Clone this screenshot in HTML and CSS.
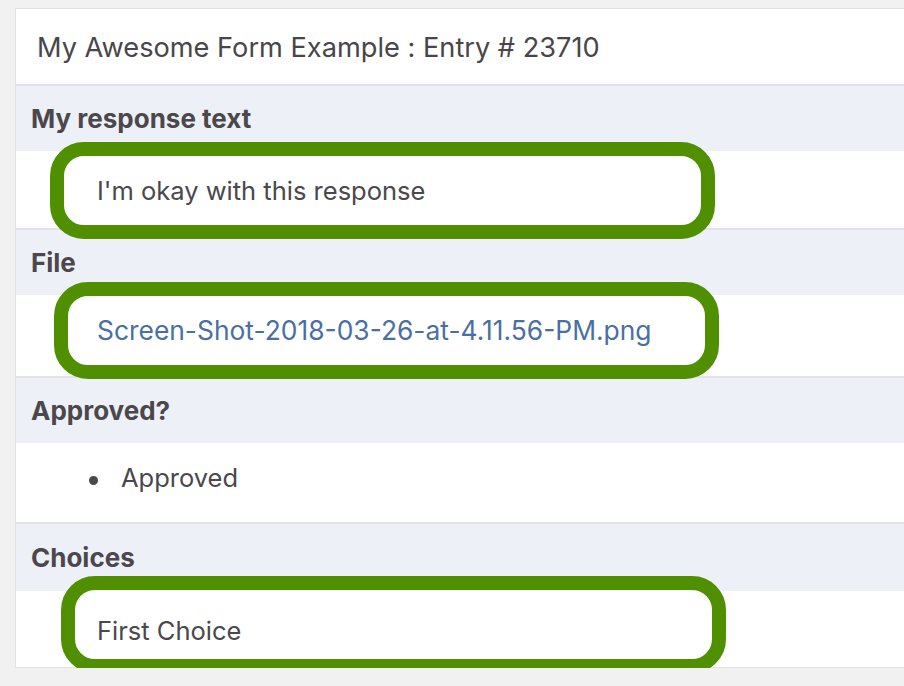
FILE: index.html
```html
<!DOCTYPE html>
<html lang="en">
<head>
    <meta charset="UTF-8">
    <meta name="viewport" content="width=device-width, initial-scale=1.0">
    <title>Entry # 23710</title>
    <link rel="stylesheet" href="styles.css">
</head>
<body>
    <div class="entry">
        <div class="entry-title">My Awesome Form Example : Entry # 23710</div>

        <div class="field">
            <div class="field-label">My response text</div>
            <div class="field-value value-text">
                I'm okay with this response
                <span class="highlight highlight-response"></span>
            </div>
        </div>

        <div class="field">
            <div class="field-label">File</div>
            <div class="field-value value-file">
                <a href="#">Screen-Shot-2018-03-26-at-4.11.56-PM.png</a>
                <span class="highlight highlight-file"></span>
            </div>
        </div>

        <div class="field">
            <div class="field-label">Approved?</div>
            <div class="field-value value-list">
                <ul>
                    <li>Approved</li>
                </ul>
            </div>
        </div>

        <div class="field">
            <div class="field-label">Choices</div>
            <div class="field-value value-text value-last">
                First Choice
                <span class="highlight highlight-choice"></span>
            </div>
        </div>
    </div>
</body>
</html>
```

FILE: styles.css
```css
* {
    margin: 0;
    padding: 0;
    box-sizing: border-box;
}

html, body {
    overflow: hidden;
}

body {
    background-color: #f1f1f1;
    font-family: Inter, "Liberation Sans", Arial, sans-serif;
    color: #4a484c;
    padding: 8px 0 0 15px;
}

.entry {
    background-color: white;
    border: 1px solid #e2e2e2;
    border-right: none;
    margin-right: -40px;
}

.entry-title {
    font-size: 27.2px;
    line-height: 32px;
    padding: 23px 0 20px 21px;
    color: #48464a;
    font-feature-settings: "calt" 0;
}

.field {
    border-top: 2px solid #e2e4e7;
}

.field-label {
    background-color: #edf1f7;
    font-size: 26px;
    font-weight: 700;
    line-height: 30px;
    padding: 18px 0 17px 15px;
    color: #4c474d;
}

.field:last-child .field-label {
    padding-top: 19px;
    padding-bottom: 18px;
}

.field-value {
    position: relative;
    font-size: 25.5px;
    line-height: 30px;
    padding-left: 81px;
}

.value-text {
    padding-top: 25px;
    padding-bottom: 22px;
}

.value-last {
    padding-bottom: 21px;
}

.value-file {
    font-size: 26.4px;
    padding-top: 20px;
    padding-bottom: 31px;
}

.value-file a {
    color: #4a6fa5;
    text-decoration: none;
}

.value-list {
    padding: 20px 0 29px 73px;
}

.value-list ul {
    list-style: none;
}

.value-list li::before {
    content: "";
    display: inline-block;
    width: 9px;
    height: 9px;
    border-radius: 50%;
    background-color: #4a484c;
    vertical-align: middle;
    margin-right: 23px;
}

/* green annotation rings drawn over the values */
.highlight {
    position: absolute;
    width: 665px;
    height: 97px;
    border: 14px solid #4f8f00;
    border-radius: 34px;
}

.highlight-response {
    left: 34px;
    top: -9px;
}

.highlight-file {
    left: 38px;
    top: -13px;
}

.highlight-choice {
    left: 45px;
    top: -15px;
}
```
